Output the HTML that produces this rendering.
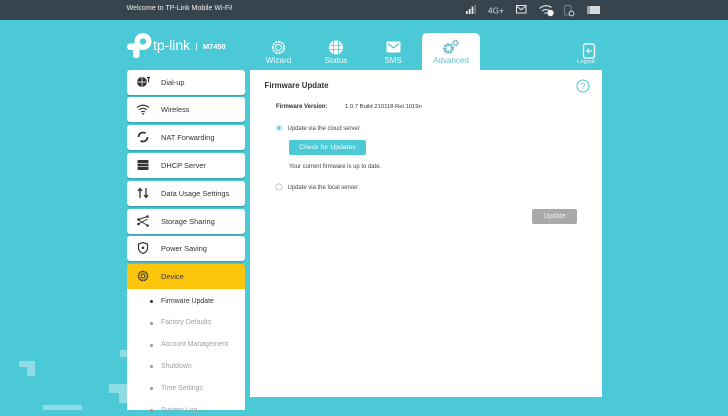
<!DOCTYPE html>
<html><head><meta charset="utf-8">
<style>
*{box-sizing:border-box}
html,body{margin:0;padding:0}
body{width:728px;height:410px;overflow:hidden;position:relative;background:#4bc9d6;font-family:"Liberation Sans",sans-serif;color:#333}
.a{position:absolute;white-space:nowrap}
.top{left:0;top:0;width:728px;height:20px;background:#37444d}
.it{position:absolute;left:126.5px;width:118.5px;height:25px;background:#fff;border-radius:3px;box-shadow:0 1.5px 0 rgba(40,120,130,.45)}
.it span{position:absolute;left:34.5px;top:7px;font-size:7.45px;color:#333;line-height:12px;white-space:nowrap}
.it svg{position:absolute;left:8.5px;top:4px}
.sub{position:absolute;left:161px;font-size:6.9px;line-height:10px;color:#a0a0a0;white-space:nowrap}
.dot{position:absolute;left:150px;width:3px;height:3px;border-radius:50%;background:#999}
.tab{position:absolute;font-size:8px;color:#e8fafc;text-align:center;width:50px;top:54.5px;line-height:11px}
.deco{position:absolute;background:#8fdce4}
</style></head><body>
<div class="a top"></div>
<div class="a" style="left:126.5px;top:3px;font-size:7.05px;line-height:11px;color:#eceff0">Welcome to TP-Link Mobile Wi-Fi!</div>
<svg class="a" style="left:464px;top:3px" width="140" height="14" viewBox="0 0 140 14">
<g fill="#e2e5e6">
<rect x="2" y="8" width="1.8" height="3"/><rect x="4.800" y="6" width="1.800" height="5"/><rect x="7.600" y="3.500" width="1.800" height="7.500"/><rect x="10.400" y="2" width="1.400" height="9" fill="#7d8a91"/>
</g>
<text x="24" y="10.500" font-family="Liberation Sans" font-size="8.300" fill="#d9dddf">4G+</text>
<rect x="52.500" y="2.500" width="9.500" height="7.500" fill="none" stroke="#e2e5e6" stroke-width="1"/><path d="M53 3.500l4.200 3.200 4.200-3.200" fill="none" stroke="#e2e5e6"/>
<path d="M75.500 5.500q6-5 12-1M78 8q3.500-2.500 7-.8M80.500 10.500q1.200-1 2.500-.3" fill="none" stroke="#e2e5e6" stroke-width="1.100"/><circle cx="86.500" cy="10" r="3.200" fill="#f2f3f3"/>
<rect x="100.500" y="2.500" width="6.500" height="9.500" rx="1" fill="none" stroke="#788389"/><circle cx="107.500" cy="10.500" r="2.400" fill="#37444d" stroke="#d9dddf"/>
<rect x="125" y="3" width="11" height="8" fill="#d6dadc"/><rect x="123" y="3" width="3" height="8" fill="#9aa4a9"/>
</svg>

<!-- logo -->
<svg class="a" style="left:126px;top:32px" width="27" height="27" viewBox="0 0 27 27">
<circle cx="17" cy="9.500" r="5.800" fill="none" stroke="#fff" stroke-width="5.400"/>
<rect x="1" y="11.500" width="14" height="6.500" rx="3" fill="#fff"/>
<rect x="7" y="11.500" width="6.500" height="14.500" rx="2.500" fill="#fff"/>
</svg>
<div class="a" style="left:153px;top:38px;font-size:14.200px;line-height:16px;color:#fff;letter-spacing:-.1px">tp-link</div>
<div class="a" style="left:196px;top:43px;width:1px;height:7px;background:#d6f4f7"></div>
<div class="a" style="left:203px;top:41.500px;font-size:7.400px;line-height:10px;font-weight:bold;color:#fff">M7450</div>

<!-- tabs -->
<svg class="a" style="left:271px;top:40px" width="15" height="15" viewBox="0 0 15 15"><circle cx="7.500" cy="7.500" r="5.700" fill="none" stroke="#fff" stroke-width="1.700" stroke-dasharray="2.500 .8"/><circle cx="7.500" cy="7.500" r="3" fill="none" stroke="#fff"/></svg>
<div class="tab" style="left:253.500px;font-size:8.300px">Wizard</div>
<svg class="a" style="left:328px;top:40px" width="16" height="15" viewBox="0 0 16 15"><circle cx="8" cy="7.500" r="7" fill="#fff"/><path d="M2 5.500h12M2 9.500h12M5.500 1.500v12M10.500 1.500v12" stroke="#4bc9d6" stroke-width=".8"/></svg>
<div class="tab" style="left:311px">Status</div>
<svg class="a" style="left:386px;top:41px" width="15" height="12" viewBox="0 0 15 12"><rect x=".5" y=".5" width="14" height="11" rx="1" fill="#fff"/><path d="M2 2.500l5.500 4.500 5.500-4.500" fill="none" stroke="#4bc9d6" stroke-width="1.200"/></svg>
<div class="tab" style="left:368px">SMS</div>
<div class="a" style="left:422px;top:33px;width:58px;height:38px;background:#fff;border-radius:5px 5px 0 0"></div>
<svg class="a" style="left:441px;top:39px" width="20" height="16" viewBox="0 0 20 16"><circle cx="7.500" cy="9.500" r="3.800" fill="none" stroke="#5cb8c6" stroke-width="3" stroke-dasharray="2 .7"/><circle cx="14.500" cy="4" r="2.300" fill="none" stroke="#7fb6c4" stroke-width="2" stroke-dasharray="1.300 .5"/></svg>
<div class="tab" style="left:426px;color:#67bfcb">Advanced</div>
<svg class="a" style="left:582px;top:43px" width="14" height="16" viewBox="0 0 14 16"><rect x="1.500" y="1" width="11" height="14" rx="2" fill="none" stroke="#fff" stroke-width="1.300"/><path d="M10.500 8H5M7 5.800L4.800 8 7 10.200" fill="none" stroke="#fff" stroke-width="1.100"/></svg>
<div class="a" style="left:577px;top:58px;font-size:5.800px;line-height:8px;color:#f0fbfc">Logout</div>

<!-- decorations -->
<div class="deco" style="left:19px;top:361px;width:16px;height:6px"></div>
<div class="deco" style="left:27px;top:361px;width:8px;height:15px"></div>
<div class="deco" style="left:120px;top:350px;width:7px;height:7px"></div>
<div class="deco" style="left:109px;top:384px;width:18px;height:9px"></div>
<div class="deco" style="left:119px;top:384px;width:8px;height:19px"></div>
<div class="deco" style="left:43px;top:405px;width:39px;height:5px"></div>

<!-- sidebar -->
<div class="a" style="left:126.500px;top:289px;width:118.500px;height:121px;background:#fff"></div>

<div class="it" style="top:69.500px"><span>Dial-up</span><svg width="16" height="16" viewBox="0 0 16 16"><circle cx="7" cy="8" r="5" fill="#333"/><path d="M2 8h10M7 3v10" stroke="#fff" stroke-width=".7"/><path d="M12 3.500h3M13.500 3.500v5" stroke="#333" stroke-width="1.200"/></svg></div>
<div class="it" style="top:97.300px"><span>Wireless</span><svg width="16" height="16" viewBox="0 0 16 16"><path d="M2 6.500q6-4.500 12 0M4 8.800q4-3 8 0M6 11q2-1.400 4 0" fill="none" stroke="#333" stroke-width="1.100"/><circle cx="8" cy="12.800" r=".9" fill="#333"/></svg></div>
<div class="it" style="top:125.100px"><span>NAT Forwarding</span><svg width="16" height="16" viewBox="0 0 16 16"><path d="M3.500 8a4.500 4.500 0 0 1 7-3.700M12.500 8a4.500 4.500 0 0 1-7 3.700" fill="none" stroke="#333" stroke-width="1.800"/></svg></div>
<div class="it" style="top:152.900px"><span>DHCP Server</span><svg width="16" height="16" viewBox="0 0 16 16"><rect x="2.500" y="3" width="11" height="10" rx="1" fill="#333"/><path d="M2.500 6.300h11M2.500 9.700h11" stroke="#fff" stroke-width=".7"/></svg></div>
<div class="it" style="top:180.700px"><span>Data Usage Settings</span><svg width="16" height="16" viewBox="0 0 16 16"><path d="M5 13V4M3 6l2-2.500L7 6M11 3v9M9 10l2 2.500 2-2.500" fill="none" stroke="#333" stroke-width="1.300"/></svg></div>
<div class="it" style="top:208.500px"><span>Storage Sharing</span><svg width="16" height="16" viewBox="0 0 16 16"><path d="M3.500 6.500l9-3M3.500 7l9 5.500M3.500 11l9-5" stroke="#333" stroke-width="1" fill="none"/><circle cx="3.500" cy="6.500" r="1.300" fill="#333"/><circle cx="12.500" cy="3.500" r="1.300" fill="#333"/><circle cx="12.500" cy="12.500" r="1.300" fill="#333"/><circle cx="3.500" cy="11" r="1.300" fill="#333"/></svg></div>
<div class="it" style="top:236.300px"><span>Power Saving</span><svg width="16" height="16" viewBox="0 0 16 16"><path d="M8 2.500l4.500 1.500v4q0 3.500-4.500 5.500Q3.500 11.500 3.500 8V4z" fill="none" stroke="#333" stroke-width="1.200"/><circle cx="8" cy="7.800" r="1.300" fill="#333"/></svg></div>
<div class="it" style="top:264px;background:#fdc40c;border-radius:3px 3px 0 0;box-shadow:none"><span>Device</span><svg width="16" height="16" viewBox="0 0 16 16"><circle cx="8" cy="8" r="4.500" fill="none" stroke="#333" stroke-width="1.600" stroke-dasharray="1.700 .6"/><circle cx="8" cy="8" r="2" fill="none" stroke="#333" stroke-width="1"/></svg></div>

<div class="dot" style="top:299.500px;background:#333"></div><div class="sub" style="top:296.500px;color:#333">Firmware Update</div>
<div class="dot" style="top:321.500px"></div><div class="sub" style="top:318px">Factory Defaults</div>
<div class="dot" style="top:343.500px"></div><div class="sub" style="top:340px">Account Management</div>
<div class="dot" style="top:365px"></div><div class="sub" style="top:362px">Shutdown</div>
<div class="dot" style="top:387px"></div><div class="sub" style="top:384px">Time Settings</div>
<div class="dot" style="top:408.500px"></div><div class="sub" style="top:406px">System Log</div>

<!-- panel -->
<div class="a" style="left:250px;top:70px;width:352px;height:327px;background:#fff"></div>
<div class="a" style="left:264.500px;top:79.500px;font-size:7.900px;line-height:11px;font-weight:bold;color:#333">Firmware Update</div>
<svg class="a" style="left:576px;top:79px" width="14" height="14" viewBox="0 0 14 14"><circle cx="7" cy="7" r="6" fill="none" stroke="#5cc5d1" stroke-width="1.100"/><text x="7" y="10" text-anchor="middle" font-family="Liberation Sans" font-size="8.500" fill="#5cc5d1">?</text></svg>
<div class="a" style="left:276px;top:103px;font-size:5.950px;line-height:9px;font-weight:bold;color:#333">Firmware Version:</div>
<div class="a" style="left:345px;top:103px;font-size:5.870px;line-height:9px;color:#333">1.0.7 Build 210118 Rel.1019n</div>
<svg class="a" style="left:275px;top:124px" width="8" height="8" viewBox="0 0 8 8"><circle cx="4" cy="4" r="3.200" fill="#fff" stroke="#bfe8ec" stroke-width=".8"/><circle cx="4" cy="4" r="1.800" fill="#5ac6d2"/></svg>
<div class="a" style="left:287.500px;top:124.500px;font-size:5.950px;line-height:9px;color:#444">Update via the cloud server</div>
<div class="a" style="left:289px;top:140px;width:77px;height:15px;background:#4bc9d6;border-radius:2px;color:#fff;font-size:6.850px;line-height:15px;text-align:center">Check for Updates</div>
<div class="a" style="left:289px;top:163px;font-size:5.950px;line-height:9px;color:#444">Your current firmware is up to date.</div>
<svg class="a" style="left:275px;top:183px" width="8" height="8" viewBox="0 0 8 8"><circle cx="4" cy="4" r="3.200" fill="#fff" stroke="#bbb" stroke-width=".8"/></svg>
<div class="a" style="left:287.500px;top:183.500px;font-size:5.950px;line-height:9px;color:#444">Update via the local server</div>
<div class="a" style="left:532px;top:209px;width:45px;height:15px;background:#a9a9a9;border-radius:2px;color:#eee;font-size:6.900px;line-height:15px;text-align:center">Update</div>
</body></html>
